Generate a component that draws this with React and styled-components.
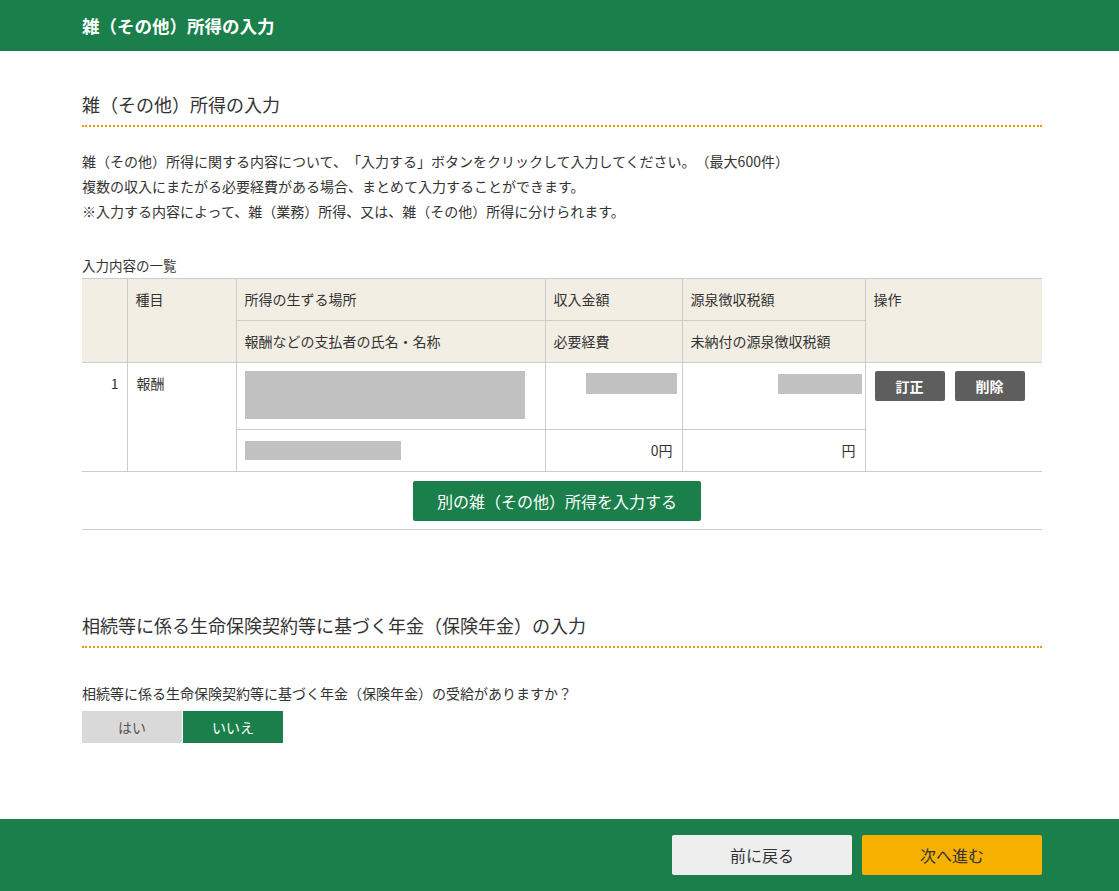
import React from 'react'
import styled, { createGlobalStyle } from 'styled-components'

const GlobalStyle = createGlobalStyle`
  html, body {
    margin: 0;
    padding: 0;
    background: #fff;
  }
  body {
    font-family: "Noto Sans CJK JP", "Noto Sans", sans-serif;
    color: #333;
    font-size: 14px;
    text-spacing-trim: space-all;
  }
  * { box-sizing: border-box; }
`;

const GREEN = '#1a7f4b';
const BORDER = '#cccccc';

const TopBar = styled.header`
  height: 51px;
  background: ${GREEN};
  color: #fff;
  font-weight: bold;
  font-size: 17.5px;
  line-height: 51px;
  padding-left: 82px;
`;

const Main = styled.main`
  width: 960px;
  margin-left: 82px;
`;

const SectionTitle = styled.h2`
  margin: ${({ $top }) => $top}px 0 0;
  font-size: 18px;
  font-weight: normal;
  line-height: 24px;
  padding-bottom: 9px;
  border-bottom: 2px dotted #e89a00;
  color: #333;
`;

const Lead = styled.div`
  margin-top: 22px;
  line-height: 25px;
  font-size: 14px;
`;

const Caption = styled.div`
  margin-top: 31px;
  margin-bottom: 3px;
  font-size: 13.5px;
  line-height: 20px;
`;

const Table = styled.table`
  width: 960px;
  border-collapse: collapse;
  table-layout: fixed;
  font-size: 14px;
  border-top: 1px solid ${BORDER};
  border-bottom: 1px solid ${BORDER};
`;

const Th = styled.th`
  background: #f2eee4;
  font-weight: normal;
  text-align: left;
  vertical-align: top;
  height: 42px;
  padding: 10px 8px 0 8px;
  line-height: 20px;
  border: 1px solid ${BORDER};
  &:first-child { border-left: none; }
  &:last-child { border-right: none; }
`;

const Td = styled.td`
  vertical-align: top;
  padding: ${({ $pad }) => $pad || '9px 8px'};
  line-height: 20px;
  text-align: ${({ $align }) => $align || 'left'};
  border: 1px solid ${BORDER};
  &:first-child { border-left: none; }
  &:last-child { border-right: none; }
`;

const Mask = styled.div`
  background: #c1c1c1;
  width: ${({ $w }) => $w}px;
  height: ${({ $h }) => $h}px;
  margin-left: ${({ $right }) => ($right ? 'auto' : '0')};
`;

const Ops = styled.div`
  display: flex;
  gap: 10px;
`;

const DarkButton = styled.button`
  width: 70px;
  height: 30px;
  border: none;
  border-radius: 2px;
  background: #5e5e5e;
  color: #fff;
  font-family: inherit;
  font-size: 14px;
  font-weight: bold;
`;

const AddRow = styled.div`
  display: flex;
  justify-content: center;
  padding: 9px 10px 8px 0;
  border-bottom: 1px solid ${BORDER};
`;

const GreenButton = styled.button`
  width: 288px;
  height: 40px;
  border: none;
  border-radius: 2px;
  background: ${GREEN};
  color: #fff;
  font-family: inherit;
  font-size: 16px;
`;

const Question = styled.div`
  margin-top: 35px;
  font-size: 14px;
  line-height: 20px;
`;

const Toggle = styled.div`
  display: flex;
  gap: 1px;
  margin-top: 8px;
`;

const ToggleButton = styled.button`
  width: 100px;
  height: 32px;
  border: none;
  font-family: inherit;
  font-size: 14px;
  background: ${({ $active }) => ($active ? GREEN : '#d9d9d9')};
  color: ${({ $active }) => ($active ? '#fff' : '#555')};
`;

const Footer = styled.footer`
  margin-top: 76px;
  height: 72px;
  background: ${GREEN};
  padding: 16px 0 0 82px;
`;

const FooterInner = styled.div`
  width: 960px;
  display: flex;
  justify-content: flex-end;
  gap: 10px;
`;

const NavButton = styled.button`
  width: 180px;
  height: 40px;
  border: none;
  border-radius: 2px;
  font-family: inherit;
  font-size: 16px;
  color: #333;
  background: ${({ $primary }) => ($primary ? '#f5b000' : '#eeeeee')};
`;

export default function App() {
  return (
    <>
      <GlobalStyle />
      <TopBar>雑（その他）所得の入力</TopBar>
      <Main>
        <SectionTitle $top={41}>雑（その他）所得の入力</SectionTitle>
        <Lead>
          雑（その他）所得に関する内容について、「入力する」ボタンをクリックして入力してください。（最大600件）<br />
          複数の収入にまたがる必要経費がある場合、まとめて入力することができます。<br />
          ※入力する内容によって、雑（業務）所得、又は、雑（その他）所得に分けられます。
        </Lead>
        <Caption>入力内容の一覧</Caption>
        <Table>
          <colgroup>
            <col style={{ width: 45 }} />
            <col style={{ width: 109 }} />
            <col style={{ width: 309 }} />
            <col style={{ width: 137 }} />
            <col style={{ width: 183 }} />
            <col style={{ width: 177 }} />
          </colgroup>
          <thead>
            <tr>
              <Th rowSpan={2}></Th>
              <Th rowSpan={2}>種目</Th>
              <Th>所得の生ずる場所</Th>
              <Th>収入金額</Th>
              <Th>源泉徴収税額</Th>
              <Th rowSpan={2}>操作</Th>
            </tr>
            <tr>
              <Th>報酬などの支払者の氏名・名称</Th>
              <Th>必要経費</Th>
              <Th>未納付の源泉徴収税額</Th>
            </tr>
          </thead>
          <tbody>
            <tr>
              <Td rowSpan={2} $align="right" $pad="10px 8px">1</Td>
              <Td rowSpan={2} $pad="10px 9px">報酬</Td>
              <Td $pad="8px 8px 10px">
                <Mask $w={280} $h={48} />
              </Td>
              <Td $pad="10px 5px 0 0" style={{ height: 67 }}>
                <Mask $w={91} $h={21} $right />
              </Td>
              <Td $pad="11px 3px 0 0">
                <Mask $w={84} $h={20} $right />
              </Td>
              <Td rowSpan={2} $pad="8px 9px">
                <Ops>
                  <DarkButton>訂正</DarkButton>
                  <DarkButton>削除</DarkButton>
                </Ops>
              </Td>
            </tr>
            <tr>
              <Td $pad="11px 8px 10px" style={{ height: 42 }}>
                <Mask $w={156} $h={19} />
              </Td>
              <Td $align="right" $pad="10px 9px">0円</Td>
              <Td $align="right" $pad="10px 9px">円</Td>
            </tr>
          </tbody>
        </Table>
        <AddRow>
          <GreenButton>別の雑（その他）所得を入力する</GreenButton>
        </AddRow>
        <SectionTitle $top={83}>相続等に係る生命保険契約等に基づく年金（保険年金）の入力</SectionTitle>
        <Question>相続等に係る生命保険契約等に基づく年金（保険年金）の受給がありますか？</Question>
        <Toggle>
          <ToggleButton>はい</ToggleButton>
          <ToggleButton $active>いいえ</ToggleButton>
        </Toggle>
      </Main>
      <Footer>
        <FooterInner>
          <NavButton>前に戻る</NavButton>
          <NavButton $primary>次へ進む</NavButton>
        </FooterInner>
      </Footer>
    </>
  )
}
